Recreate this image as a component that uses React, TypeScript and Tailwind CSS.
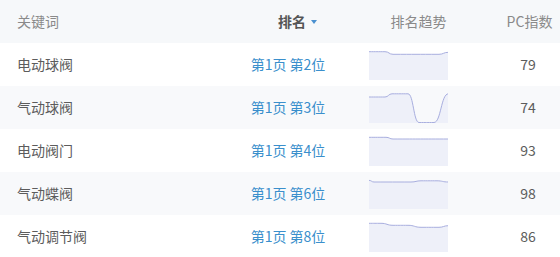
import React from "react";

type Row = {
  keyword: string;
  page: number;
  pos: number;
  pc: number;
  // Trend line points in chart-local coordinates (79 x 30)
  trend: Array<[number, number]>;
};

const ROWS: Row[] = [
  {
    keyword: "电动球阀",
    page: 1,
    pos: 2,
    pc: 79,
    trend: [[0, 1.7], [16, 1.7], [24, 4.3], [70, 4.3], [79, 2.3]],
  },
  {
    keyword: "气动球阀",
    page: 1,
    pos: 3,
    pc: 74,
    trend: [[0, 4], [16, 4], [23, 0.8], [39, 0.8], [50, 29.5], [65, 29.5], [79, 0.8]],
  },
  {
    keyword: "电动阀门",
    page: 1,
    pos: 4,
    pc: 93,
    trend: [[0, 1.3], [17, 1.3], [24, 3], [79, 3]],
  },
  {
    keyword: "气动蝶阀",
    page: 1,
    pos: 6,
    pc: 98,
    trend: [[0, 1.3], [5, 3], [42, 3], [52, 1.8], [68, 1.8], [79, 3]],
  },
  {
    keyword: "气动调节阀",
    page: 1,
    pos: 8,
    pc: 86,
    trend: [[0, 1.3], [12, 1.3], [24, 3.3], [39, 3.3], [52, 5.3], [70, 5.3], [79, 3.7]],
  },
];

// smooth curve: horizontal tangents at each point, like a monotone step chart
function smooth(points: Array<[number, number]>) {
  let d = `${points[0][0]},${points[0][1]}`;
  for (let i = 1; i < points.length; i++) {
    const [x0, y0] = points[i - 1];
    const [x1, y1] = points[i];
    const mx = (x0 + x1) / 2;
    d += ` C${mx},${y0} ${mx},${y1} ${x1},${y1}`;
  }
  return d;
}

function Sparkline({ points }: { points: Array<[number, number]> }) {
  const curve = smooth(points);
  return (
    <svg width="79" height="30" viewBox="0 0 79 30" className="block">
      <path d={`M0,30 L${curve} L79,30 Z`} fill="#eef0f9" />
      <path
        d={`M${curve}`}
        fill="none"
        stroke="#a8aedf"
        strokeWidth="1"
        strokeLinecap="round"
      />
    </svg>
  );
}

function Caret({ className = "" }: { className?: string }) {
  return (
    <svg width="6" height="4" viewBox="0 0 6 4" className={className}>
      <path d="M0 0h6L3 4z" fill="currentColor" />
    </svg>
  );
}

export default function App() {
  return (
    <div
      className="w-[560px] h-[257px] overflow-hidden bg-white text-[14px]"
      style={{ fontFamily: '"Microsoft YaHei", "Noto Sans CJK SC", sans-serif' }}
    >
      <div className="w-[588px]">
        {/* Header */}
        <div className="grid grid-cols-[228px_120px_120px_120px] h-[43px] items-center bg-[#f6f8fa] text-[#8a8a8a]">
          <div className="pl-[17px]">关键词</div>
          <div className="flex items-center justify-center pl-[19px] text-[#555] font-bold">
            排名
            <Caret className="ml-[5px] text-[#4a90d0]" />
          </div>
          <div className="text-center pl-[21px]">排名趋势</div>
          <div className="flex items-center justify-center pl-[17px]">
            PC指数
            <Caret className="ml-[8px] text-[#bbb]" />
          </div>
        </div>

        {ROWS.map((r, i) => (
          <div
            key={r.keyword}
            className={[
              "grid grid-cols-[228px_120px_120px_120px] h-[43px] items-center",
              i % 2 === 1 ? "bg-[#f8f9fb]" : "bg-white",
            ].join(" ")}
          >
            <div className="pl-[17px] text-[#5c5c5c]">{r.keyword}</div>
            <div className="text-center text-[#3a8fcc]">
              第{r.page}页 第{r.pos}位
            </div>
            <div className="flex justify-center">
              <Sparkline points={r.trend} />
            </div>
            <div className="text-center text-[#5c5c5c]">{r.pc}</div>
          </div>
        ))}
      </div>
    </div>
  );
}
